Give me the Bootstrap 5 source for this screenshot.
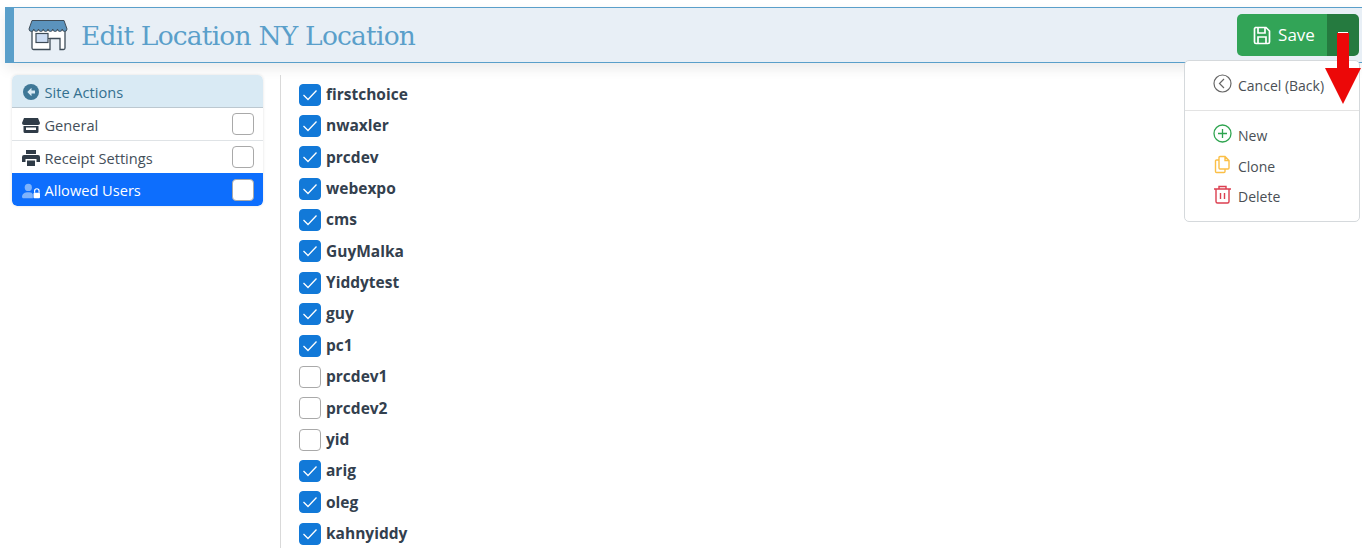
<!DOCTYPE html>
<html lang="en">
<head>
<meta charset="utf-8">
<title>Edit Location</title>
<link href="https://cdn.jsdelivr.net/npm/bootstrap@5.3.0/dist/css/bootstrap.min.css" rel="stylesheet">
<style>
html,body{height:548px;overflow:hidden}
body{font-family:"Open Sans","Noto Sans",sans-serif;background:#fff;color:#3a4652;position:relative}
.page-head{margin:7px 0 0 5px;height:56px;background:#e8eff6;border-top:1px solid #5a9fca;border-bottom:1px solid #5a9fca;border-left:9px solid #5a9fca;box-shadow:0 6px 12px rgba(0,0,0,.08);padding-left:14px;padding-right:3px}
.head-title{font-family:"DejaVu Serif",serif;font-size:26.5px;font-weight:400;color:#5a9fca;margin:2px 0 0 13px;letter-spacing:-.8px;line-height:1}
.save-group{height:42px}
.save-main{width:91px;background:#32a457;color:#fff;font-size:17px;border:0;border-radius:5px 0 0 5px;padding:0 0 0 3px;gap:7px}
.save-caret{width:32px;background:#257a3f;border:0;border-radius:0 5px 5px 0;padding:0}
.caret-bar{width:10px;height:2px;background:#fff;margin-bottom:5px}
.body-wrap{margin-top:12px;height:480px}
.side-col{width:251.5px;margin-left:11.5px;flex:none}
.side-list{border-radius:5px;box-shadow:0 0 3px rgba(0,0,0,.12);font-size:14.6px;overflow:hidden}
.side-item{height:33px;padding:2px 9px 0 10px;border:0;border-bottom:1px solid #dfe3e6;color:#444f5a;gap:5px;line-height:1}
.side-item.side-top{height:33px;background:#d9eaf4;color:#34708f;font-weight:500;border-bottom:1px solid #bcc8d0}
.side-item.active{background:#0d6efd;color:#fff;border-bottom:0}
.side-ico{width:18px;flex:none}
.side-box{width:22px;height:22px;border:1px solid #a9a9a9;border-radius:4px;background:#fff;margin:-2px 0 0 auto;flex:none}
.main-col{margin-left:17px;border-left:1px solid #d9d9d9;padding:4px 0 0 18px;flex:1}
.user-row{height:31.36px;gap:5px;font-weight:700;font-size:15.5px;color:#33404e;line-height:1}
.user-box{width:22px;height:22px;border-radius:4px;border:1px solid #a9a9a9;background:#fff;flex:none;display:flex;align-items:center;justify-content:center}
.user-box.on{background:#1279d8;border-color:#1279d8}
.menu-panel{position:absolute;left:1184px;top:60px;width:176px;height:162px;background:#fff;border:1px solid #d5d9dc;border-radius:5px;font-size:14px;color:#4a4f55;padding-left:28px}
.menu-line{height:25px;gap:6px;line-height:1}
.menu-line svg{margin-top:-4px}
.menu-rule{height:1px;background:#e3e3e3;margin:0 0 12px -28px}
.red-arrow{position:absolute;left:1324px;top:33px}
</style>
</head>
<body>
<header class="page-head d-flex align-items-center">
  <svg width="40" height="33" viewBox="0 0 40 33" aria-hidden="true">
    <path d="M4 11V29a1.500 1.500 0 0 0 1.500 1.500H22V19.500H32V30.500H35.500a1.500 1.500 0 0 0 1.500-1.500V11" fill="#fff" stroke="#3e4c58" stroke-width="1.300"/>
    <rect x="8" y="14.500" width="12" height="9" fill="#cbdcf3" stroke="#3e4c58" stroke-width="1.200"/>
    <path d="M20 19.500H22" fill="none" stroke="#3e4c58" stroke-width="1.200"/>
    <path d="M4 1.500H36L39 10a2.375 2.375 0 0 1-4.750 0 2.375 2.375 0 0 1-4.750 0 2.375 2.375 0 0 1-4.750 0 2.375 2.375 0 0 1-4.750 0 2.375 2.375 0 0 1-4.750 0 2.375 2.375 0 0 1-4.750 0 2.375 2.375 0 0 1-4.750 0 2.375 2.375 0 0 1-4.750 0Z" fill="#5b93bd" stroke="#3e4c58" stroke-width="1"/>
  </svg>
  <h1 class="head-title">Edit Location NY Location</h1>
  <div class="btn-group save-group ms-auto">
    <button type="button" class="btn save-main d-flex align-items-center justify-content-center">
      <svg width="18" height="19" viewBox="0 0 18 19" fill="none" stroke="#fff" stroke-width="1.700" aria-hidden="true"><path d="M2 1.500H13L16.500 5V16a1.500 1.500 0 0 1-1.500 1.500H3A1.500 1.500 0 0 1 1.500 16V3A1.500 1.500 0 0 1 3 1.500Z"/><path d="M5 2V7H12V2"/><path d="M5 17V11H13V17"/></svg>
      Save
    </button>
    <button type="button" class="btn save-caret d-flex align-items-center justify-content-center" aria-label="More"><span class="caret-bar"></span></button>
  </div>
</header>

<div class="body-wrap d-flex">
  <aside class="side-col">
    <div class="list-group side-list">
      <div class="list-group-item side-item side-top d-flex align-items-center">
        <svg class="side-ico" height="16" viewBox="0 0 16 16" aria-hidden="true"><circle cx="8" cy="8" r="8" fill="#3f7897"/><path d="M8.500 3.800 4.300 8l4.200 4.200V9.600H12V6.400H8.500Z" fill="#d9eaf4"/></svg>
        Site Actions
      </div>
      <div class="list-group-item side-item d-flex align-items-center">
        <svg class="side-ico" height="15" viewBox="0 0 18 15" aria-hidden="true"><path d="M2 0H16L18 5a2 2 0 0 1-2 2H2A2 2 0 0 1 0 5Z" fill="#2f3b47"/><path d="M1.500 8H16.500V13.500A1.500 1.500 0 0 1 15 15H3A1.500 1.500 0 0 1 1.500 13.500ZM4 9.500V12H14V9.500Z" fill="#2f3b47"/></svg>
        General
        <span class="side-box"></span>
      </div>
      <div class="list-group-item side-item d-flex align-items-center">
        <svg class="side-ico" height="16" viewBox="0 0 18 16" aria-hidden="true"><path d="M4 0H14V4H4ZM2 5H16A2 2 0 0 1 18 7V12H14.500V9H3.500V12H0V7A2 2 0 0 1 2 5ZM5 10.500H13V16H5Z" fill="#2f3b47"/></svg>
        Receipt Settings
        <span class="side-box"></span>
      </div>
      <div class="list-group-item side-item active d-flex align-items-center">
        <svg class="side-ico" height="16" viewBox="0 0 20 16" aria-hidden="true"><circle cx="7" cy="4" r="4" fill="#7fb3fb"/><path d="M0 15C0 11 3 9.500 7 9.500S11 10.500 12 11.500V16H1Z" fill="#7fb3fb"/><path d="M14 10V8a2.500 2.500 0 0 1 5 0V10" fill="none" stroke="#fff" stroke-width="1.300"/><rect x="12.800" y="10" width="7.200" height="6" rx="1" fill="#fff"/></svg>
        Allowed Users
        <span class="side-box"></span>
      </div>
    </div>
  </aside>
  <main class="main-col" id="users"></main>
</div>

<div class="menu-panel">
  <div class="d-flex align-items-center menu-line" style="margin-top:12px">
    <svg width="19" height="19" viewBox="0 0 19 19" fill="none" stroke="#666" stroke-width="1.200" aria-hidden="true"><circle cx="9.500" cy="9.500" r="8.500"/><path d="M11 5 6.500 9.500 11 14"/></svg>Cancel (Back)
  </div>
  <div class="menu-rule" style="margin-top:12px"></div>
  <div class="d-flex align-items-center menu-line">
    <svg width="19" height="19" viewBox="0 0 19 19" fill="none" stroke="#2ea44f" stroke-width="1.300" aria-hidden="true"><circle cx="9.500" cy="9.500" r="8.500"/><path d="M9.500 5V14M5 9.500H14"/></svg>New
  </div>
  <div class="d-flex align-items-center menu-line" style="margin-top:6px">
    <svg width="19" height="19" viewBox="0 0 19 19" fill="none" stroke="#fbbf46" stroke-width="1.400" aria-hidden="true"><path d="M7 1.500H12L16 5.500V13a1 1 0 0 1-1 1H7a1 1 0 0 1-1-1V2.500a1 1 0 0 1 1-1ZM12 1.500V5.500H16"/><path d="M6 5H3.500a1 1 0 0 0-1 1V16.500a1 1 0 0 0 1 1H11a1 1 0 0 0 1-1V14"/></svg>Clone
  </div>
  <div class="d-flex align-items-center menu-line" style="margin-top:5px">
    <svg width="19" height="19" viewBox="0 0 19 19" fill="none" stroke="#dc3f50" stroke-width="1.400" aria-hidden="true"><path d="M1 4H18M6 4V1.500H13V4M3 4V16.500A1.500 1.500 0 0 0 4.500 18H14.500A1.500 1.500 0 0 0 16 16.500V4M7.500 8V14M11.500 8V14"/></svg>Delete
  </div>
</div>

<svg class="red-arrow" width="38" height="71" viewBox="0 0 38 71" aria-hidden="true"><path d="M13 0H25V35H37L19 71 1 35H13Z" fill="#ec0808"/></svg>

<script>
var users=[["firstchoice",1],["nwaxler",1],["prcdev",1],["webexpo",1],["cms",1],["GuyMalka",1],["Yiddytest",1],["guy",1],["pc1",1],["prcdev1",0],["prcdev2",0],["yid",0],["arig",1],["oleg",1],["kahnyiddy",1]];
document.getElementById('users').innerHTML=users.map(function(u){
  return '<div class="d-flex align-items-center user-row"><span class="user-box'+(u[1]?' on':'')+'">'+(u[1]?'<svg width="16" height="12" viewBox="0 0 16 12" fill="none" stroke="#fff" stroke-width="1.300"><path d="M1.500 6 6 10.500 14.500 1.500"/></svg>':'')+'</span>'+u[0]+'</div>';
}).join('');
</script>
<script src="https://cdn.jsdelivr.net/npm/bootstrap@5.3.0/dist/js/bootstrap.bundle.min.js"></script>
</body>
</html>
